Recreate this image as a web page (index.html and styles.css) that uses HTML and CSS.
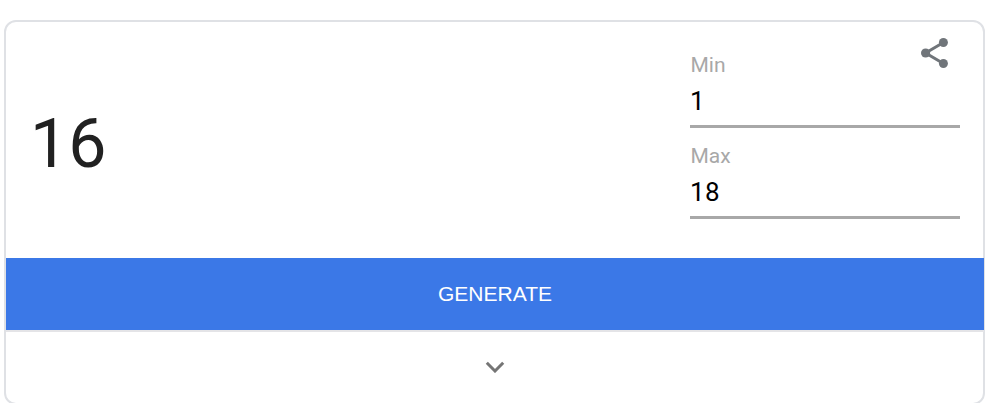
FILE: index.html
```html
<!DOCTYPE html>
<html lang="en">
<head>
<meta charset="utf-8">
<title>Random number generator</title>
<link rel="stylesheet" href="styles.css">
</head>
<body>
<main class="card">
  <section class="top">
    <div class="result">16</div>
    <div class="fields">
      <label class="field"><span class="label">Min</span><span class="value">1</span></label>
      <label class="field"><span class="label">Max</span><span class="value">18</span></label>
    </div>
    <svg class="share" viewBox="0 0 36 36"><path d="M26.400 7.500L8.600 18l17.800 10.500" fill="none" stroke="#70757a" stroke-width="3"/><g fill="#70757a"><circle cx="26.400" cy="7.500" r="4.500"/><circle cx="8.600" cy="18" r="4.600"/><circle cx="26.400" cy="28.500" r="4.500"/></g></svg>
  </section>
  <div class="generate">GENERATE</div>
  <div class="expand"><svg class="chevron" viewBox="0 0 20 12"><path d="M1.800 1.800L10 10l8.200-8.200" fill="none" stroke="#757575" stroke-width="3"/></svg></div>
</main>
</body>
</html>
```
FILE: styles.css
```css
* { box-sizing: border-box; }
body { margin: 0; background: #fff; font-family: Roboto, sans-serif; overflow: hidden; }
.card { margin: 20px 0 0 4px; width: 981px; height: 385px; border: 2px solid #dfe1e5; border-radius: 12px; }
.top { position: relative; display: flex; justify-content: space-between; height: 236px; padding: 30px 23px 0 24px; }
.result { padding-top: 49px; font-size: 68px; line-height: 87px; color: #212121; }
.fields { width: 270px; }
.field { display: block; height: 91px; }
.label { display: block; padding-left: 0.5px; font-size: 21px; line-height: 26px; color: #a8a8a8; }
.value { display: block; height: 50px; border-bottom: 3px solid #a8a8a8; font-size: 26px; line-height: 46px; letter-spacing: 0.4px; color: #000; }
.share { position: absolute; right: 30px; top: 13px; width: 36px; height: 36px; }
.generate { height: 72px; margin-right: -1px; background: #3b78e7; box-shadow: 0 2px 0 #e4e4e7; color: #fff; font-family: "Liberation Sans", sans-serif; font-size: 21px; line-height: 72px; text-align: center; }
.expand { display: flex; justify-content: center; padding-top: 31px; }
.chevron { width: 20px; height: 12px; }
```
